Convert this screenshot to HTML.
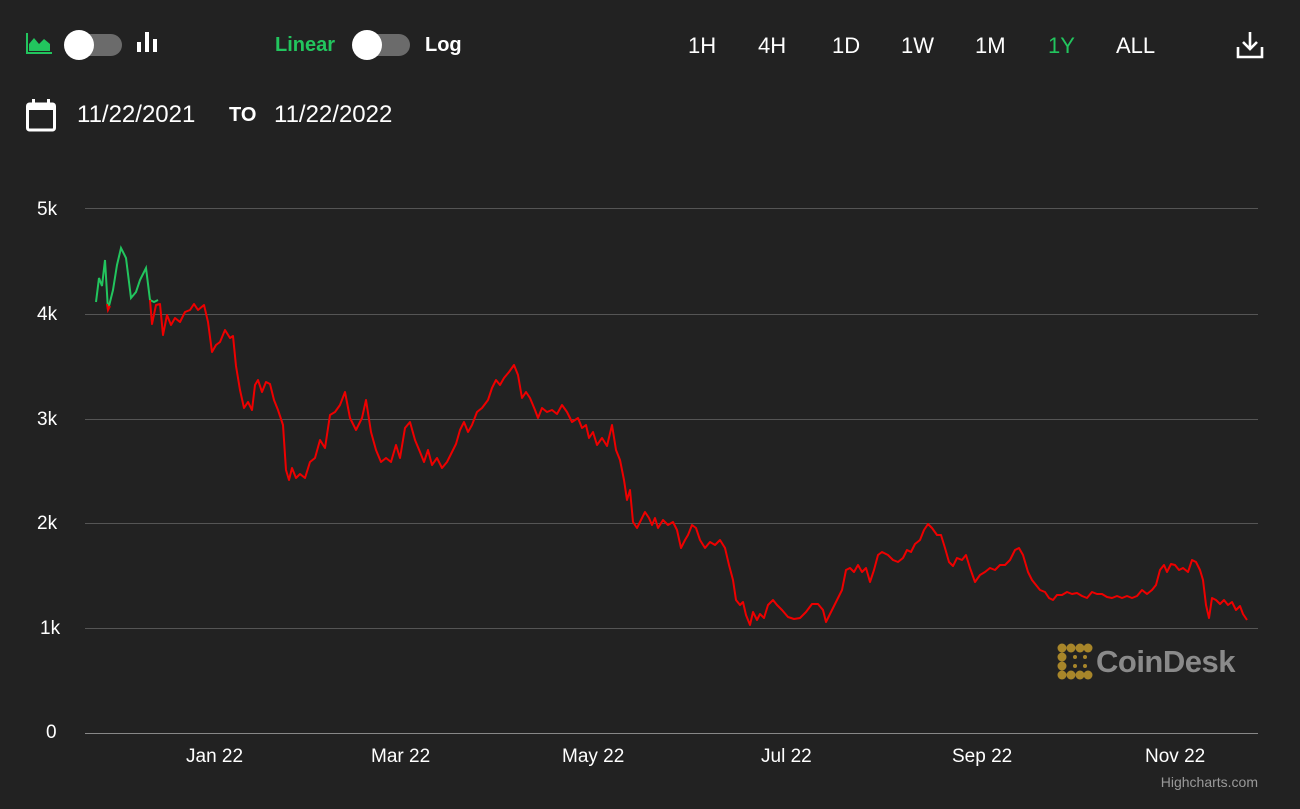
<!DOCTYPE html>
<html><head><meta charset="utf-8"><style>
html,body{margin:0;padding:0;background:#222222;width:1300px;height:809px;overflow:hidden;font-family:"Liberation Sans",sans-serif;color:#fff}
.abs{position:absolute}
.tog{position:absolute;width:56px;height:22px;border-radius:11px;background:#6b6b6b}
.tog i{position:absolute;left:-2px;top:-4px;width:30px;height:30px;border-radius:50%;background:#fff}
.rng{position:absolute;top:33px;font-size:22px;color:#fff}
.ax{position:absolute;font-size:19px;color:#fff}
</style></head><body>
<svg class="abs" style="left:26px;top:33px" width="26" height="22" viewBox="0 0 26 22"><path d="M1 0V20H26" stroke="#22c55e" stroke-width="2" fill="none"/><path d="M3 18V11L8 5L13 11L18 6L24 11V18Z" fill="#22c55e"/></svg>
<div class="tog" style="left:66px;top:34px"><i></i></div>
<svg class="abs" style="left:136px;top:30px" width="22" height="24"><rect x="1" y="12" width="4" height="10" fill="#fff"/><rect x="9" y="2" width="4" height="20" fill="#fff"/><rect x="17" y="9" width="4" height="13" fill="#fff"/></svg>
<div class="abs" style="left:275px;top:34px;font-size:20px;font-weight:bold;color:#22c55e">Linear</div>
<div class="tog" style="left:354px;top:34px"><i></i></div>
<div class="abs" style="left:425px;top:34px;font-size:20px;font-weight:bold">Log</div>
<div class="rng" style="left:688px">1H</div>
<div class="rng" style="left:758px">4H</div>
<div class="rng" style="left:832px">1D</div>
<div class="rng" style="left:901px">1W</div>
<div class="rng" style="left:975px">1M</div>
<div class="rng" style="left:1048px;color:#22c55e">1Y</div>
<div class="rng" style="left:1116px">ALL</div>
<svg class="abs" style="left:1235px;top:30px" width="30" height="30" viewBox="0 0 30 30"><path d="M15 2V19M8 12L15 19L22 12M3 17V27H27V17" stroke="#fff" stroke-width="2.6" fill="none"/></svg>
<svg class="abs" style="left:25px;top:98px" width="32" height="34" viewBox="0 0 32 34"><rect x="2.5" y="6" width="27" height="26" rx="2" stroke="#fff" stroke-width="3" fill="none"/><rect x="2.5" y="6" width="27" height="6" fill="#fff"/><rect x="7" y="1" width="3" height="7" fill="#fff"/><rect x="22" y="1" width="3" height="7" fill="#fff"/></svg>
<div class="abs" style="left:77px;top:101px;font-size:24px">11/22/2021</div>
<div class="abs" style="left:229px;top:104px;font-size:20px;font-weight:bold">TO</div>
<div class="abs" style="left:274px;top:101px;font-size:24px">11/22/2022</div>
<svg class="abs" style="left:0;top:0" width="1300" height="809">
<g stroke="#555" stroke-width="1"><line x1="85" x2="1258" y1="208.5" y2="208.5"/><line x1="85" x2="1258" y1="314.5" y2="314.5"/><line x1="85" x2="1258" y1="419.5" y2="419.5"/><line x1="85" x2="1258" y1="523.5" y2="523.5"/><line x1="85" x2="1258" y1="628.5" y2="628.5"/></g>
<line x1="85" x2="1258" y1="733.5" y2="733.5" stroke="#888"/>
<polyline fill="none" stroke="#22c55e" stroke-width="2" points="96,302 99,278 102,286 105,260 108,310 113,290 117,265 121,248 126,258 131,298 136,292 140,280 146,268 150,300 154,302 158,300"/>
<polyline fill="none" stroke="#e00" stroke-width="2" points="107,304 108,310 110,306"/>
<polyline fill="none" stroke="#e00" stroke-width="2" stroke-linejoin="round" points="150,300 152,324 156,305 160,304 163,335 167,315 171,325 175,318 180,322 185,312 190,310 194,304 198,310 204,305 208,322 212,352 216,345 220,342 225,330 230,338 233,336 236,366 240,390 244,408 248,402 252,410 255,385 258,380 262,392 266,382 270,384 274,400 278,410 283,425 286,470 289,480 292,468 296,478 300,474 305,478 310,462 315,458 320,440 325,448 330,415 335,412 340,405 345,392 350,418 356,430 362,418 366,400 371,432 376,450 381,462 386,458 391,462 396,445 400,458 405,428 410,422 415,440 420,452 424,462 428,450 432,465 437,458 442,468 447,462 452,452 456,444 460,430 464,422 468,432 472,425 477,412 482,408 488,400 492,388 496,380 500,385 504,378 509,372 514,365 518,375 522,398 526,392 530,398 535,410 538,418 542,408 547,412 552,410 557,414 562,405 567,412 572,422 578,418 582,428 586,425 589,438 593,432 597,445 602,438 607,446 612,425 616,450 620,460 624,480 627,500 630,490 633,522 637,528 641,520 645,512 649,518 652,525 655,518 658,528 663,520 668,525 673,522 677,530 681,548 685,540 688,535 692,525 696,528 700,540 705,548 710,542 715,545 720,540 725,548 729,565 733,580 736,600 740,605 743,602 746,615 750,625 753,612 757,620 760,614 764,618 768,605 773,600 777,605 782,610 788,617 794,619 800,618 806,612 812,604 818,604 823,610 826,622 830,614 834,606 838,598 842,590 846,570 850,568 854,572 858,565 862,572 866,568 870,582 874,570 878,555 882,552 888,555 893,560 898,562 903,558 907,550 911,552 915,544 920,540 924,530 928,524 932,528 937,535 941,535 945,548 949,562 953,566 957,558 962,560 966,555 970,568 975,582 980,575 985,572 990,568 995,570 1000,565 1005,565 1010,560 1015,550 1019,548 1023,555 1028,572 1032,580 1036,585 1040,590 1045,592 1049,598 1053,600 1057,595 1062,595 1067,592 1072,594 1077,593 1082,596 1087,598 1092,592 1097,594 1102,594 1107,597 1112,598 1117,596 1122,598 1127,596 1132,598 1137,596 1142,590 1147,594 1152,590 1156,585 1160,570 1164,565 1167,572 1171,564 1175,565 1179,570 1183,568 1188,572 1192,560 1196,562 1200,570 1203,580 1206,605 1209,618 1212,598 1216,600 1220,604 1224,600 1228,605 1232,602 1236,610 1240,606 1243,614 1247,620"/>
</svg>
<div class="ax" style="left:37px;top:199px">5k</div>
<div class="ax" style="left:37px;top:304px">4k</div>
<div class="ax" style="left:37px;top:409px">3k</div>
<div class="ax" style="left:37px;top:513px">2k</div>
<div class="ax" style="left:40px;top:618px">1k</div>
<div class="ax" style="left:46px;top:722px">0</div>
<div class="ax" style="left:186px;top:746px">Jan 22</div>
<div class="ax" style="left:371px;top:746px">Mar 22</div>
<div class="ax" style="left:562px;top:746px">May 22</div>
<div class="ax" style="left:761px;top:746px">Jul 22</div>
<div class="ax" style="left:952px;top:746px">Sep 22</div>
<div class="ax" style="left:1145px;top:746px">Nov 22</div>
<div class="abs" style="right:42px;top:774px;font-size:14px;color:#999">Highcharts.com</div>
<svg class="abs" style="left:1057px;top:643px" width="36" height="38" viewBox="0 0 36 38"><g fill="#a8862a"><circle cx="5" cy="5" r="4.5"/><circle cx="14" cy="5" r="4.5"/><circle cx="23" cy="5" r="4.5"/><circle cx="31" cy="5" r="4.5"/><circle cx="5" cy="14" r="4.5"/><circle cx="5" cy="23" r="4.5"/><circle cx="5" cy="32" r="4.5"/><circle cx="14" cy="32" r="4.5"/><circle cx="23" cy="32" r="4.5"/><circle cx="31" cy="32" r="4.5"/><circle cx="18" cy="14" r="2"/><circle cx="28" cy="14" r="2"/><circle cx="18" cy="23" r="2"/><circle cx="28" cy="23" r="2"/></g></svg>
<div class="abs" style="left:1096px;top:644px;font-size:31px;font-weight:bold;color:#8a8a8a;letter-spacing:-0.5px">CoinDesk</div>
</body></html>
